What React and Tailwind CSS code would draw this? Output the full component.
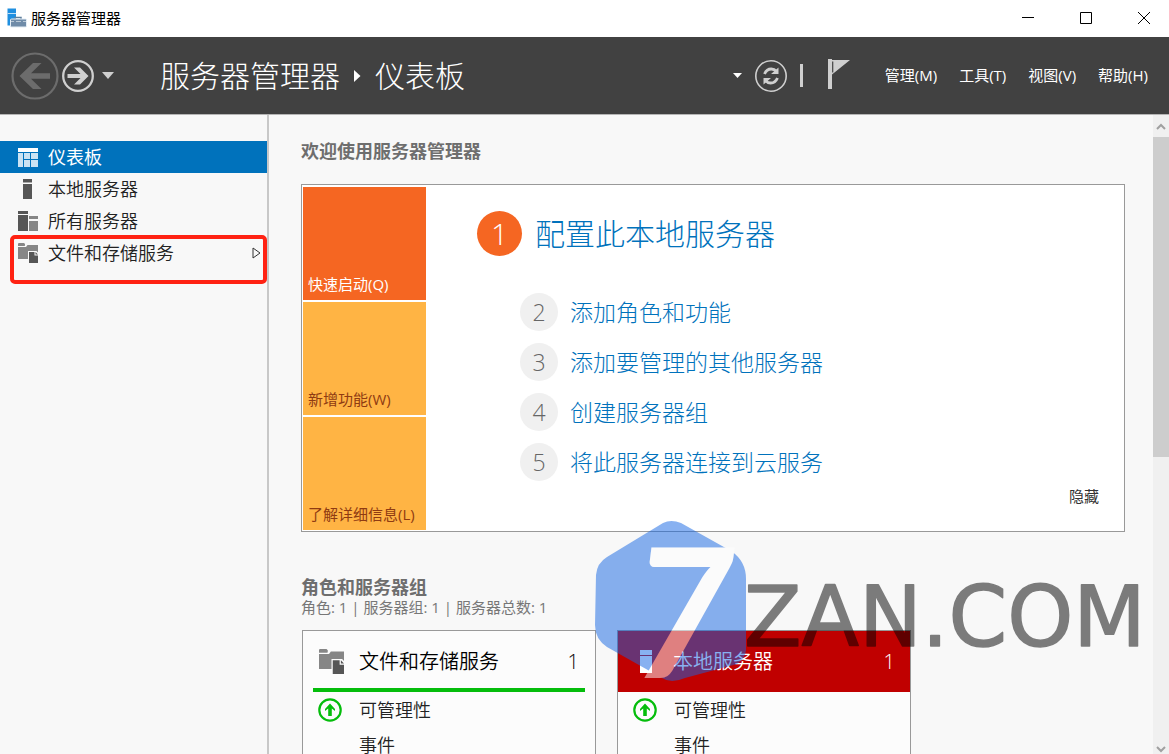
import { useState } from 'react';
import clsx from 'clsx';

const FONT = "font-['Open_Sans','Noto_Sans_CJK_SC',sans-serif]";

const NAV_ITEMS = [
  { id: 'dashboard', label: '仪表板', icon: DashboardIcon },
  { id: 'local', label: '本地服务器', icon: ServerIcon },
  { id: 'all', label: '所有服务器', icon: ServersIcon },
  { id: 'storage', label: '文件和存储服务', icon: StorageIcon, expandable: true, marked: true },
];

const MENUS = ['管理(M)', '工具(T)', '视图(V)', '帮助(H)'];

const TILES = [
  { label: '快速启动(Q)', style: 'bg-[#f56622] text-white' },
  { label: '新增功能(W)', style: 'bg-[#ffb444] text-[#8f3b12]' },
  { label: '了解详细信息(L)', style: 'bg-[#ffb444] text-[#8f3b12]' },
];

const STEPS = ['添加角色和功能', '添加要管理的其他服务器', '创建服务器组', '将此服务器连接到云服务'];

function AppIcon() {
  return (
    <svg width="20" height="20" viewBox="0 0 20 20" aria-hidden="true">
      <rect x="0.5" y="0.5" width="8.5" height="17" fill="#1f8fe0" />
      <path d="M0.5 5.5h8.5" stroke="#bfe0f7" />
      <path d="M8 11V9.5h6V11" fill="none" stroke="#5e7f9d" strokeWidth="1.5" />
      <rect x="3.5" y="11" width="16" height="8" rx="1" fill="#6f8ba8" stroke="#e4edf5" />
      <path d="M4 13.500h3M9 13.500h5M16 13.500h3" stroke="#b9c8d6" />
    </svg>
  );
}

function DashboardIcon() {
  return (
    <svg width="20" height="20" viewBox="0 0 20 20" aria-hidden="true">
      <rect width="20" height="4" y="1" fill="#fff" />
      <path fill="#cbe3f3" d="M0 6h5v14H0zM6 6h6v6H6zM13 6h7v6h-7zM6 13h6v7H6zM13 13h7v7h-7z" />
    </svg>
  );
}

function ServerIcon() {
  return (
    <svg width="20" height="20" viewBox="0 0 20 20" aria-hidden="true">
      <path fill="#565656" d="M5 0h9v3H5zM5 5h9v15H5z" />
      <path fill="#a9a9a9" d="M5 3h9v1H5z" />
    </svg>
  );
}

function ServersIcon() {
  return (
    <svg width="20" height="20" viewBox="0 0 20 20" aria-hidden="true">
      <path fill="#565656" d="M0 0h10v3H0zM0 4h10v16H0z" />
      <path fill="#868686" d="M11 5h9v3h-9zM11 10h9v10h-9z" />
    </svg>
  );
}

function StorageIcon({ size = 20 }) {
  return (
    <svg width={size} height={size} viewBox="0 0 20 20" aria-hidden="true">
      <path fill="#868686" d="M0 .5L.5 0H6l1 1v1.500L6.500 3H0z" />
      <path fill="#868686" d="M0 4h8l1.500-2H20v7.500L18.500 8H10v8H0z" />
      <path fill="#565656" d="M11 9h5.500v3.500H20V20h-9z" />
      <path fill="#565656" d="M17.500 9l2.500 2.500h-2.500z" />
    </svg>
  );
}

function UpIcon() {
  return (
    <svg width="24" height="24" viewBox="0 0 24 24" aria-hidden="true">
      <circle cx="12" cy="12" r="10.700" fill="none" stroke="#05bd0c" strokeWidth="2.200" />
      <path fill="#05bd0c" d="M12 5.500l5 5.500v2l-3.200-2.500V18h-3.600v-7.500L7 13v-2z" />
    </svg>
  );
}

function TitleBar() {
  return (
    <div className="flex h-[37px] shrink-0 items-center bg-white pr-[1px] pb-[1px] pl-[7px] text-black">
      <AppIcon />
      <span className="ml-1 text-[15px] leading-5">服务器管理器</span>
      <div className="ml-auto flex h-full gap-[10px]">
        <button type="button" aria-label="最小化" className="flex w-12 items-center justify-center">
          <svg width="12" height="12" viewBox="0 0 12 12"><path d="M0 5.500h12" stroke="#000" /></svg>
        </button>
        <button type="button" aria-label="最大化" className="flex w-12 items-center justify-center">
          <svg width="12" height="12" viewBox="0 0 12 12"><path d="M.5.5h11v11H.5z" fill="none" stroke="#000" /></svg>
        </button>
        <button type="button" aria-label="关闭" className="flex w-12 items-center justify-center">
          <svg width="12" height="12" viewBox="0 0 12 12"><path d="M0 0l12 12M12 0L0 12" stroke="#000" /></svg>
        </button>
      </div>
    </div>
  );
}

function Header() {
  return (
    <header className="flex h-[78px] shrink-0 items-center border-b border-[#b5b5b5] bg-[#414141] pr-[21px] pl-[11px] text-white">
      <button type="button" aria-label="后退">
        <svg width="48" height="48" viewBox="0 0 48 48">
          <circle cx="24" cy="24" r="22.500" fill="none" stroke="#6c6c6c" strokeWidth="2.200" />
          <path fill="#6c6c6c" d="M8.500 24L22 11h8.500L20 21.300h19v5.400H20L30.500 37H22z" />
        </svg>
      </button>
      <button type="button" aria-label="前进" className="ml-[3px]">
        <svg width="32" height="32" viewBox="0 0 32 32">
          <circle cx="16" cy="16" r="14.800" fill="none" stroke="#cfcfcf" strokeWidth="2.300" />
          <path fill="#cfcfcf" d="M26.500 16L18 24.500h-6l6.500-6.500H5.500v-4h13L12 7.500h6z" />
        </svg>
      </button>
      <button type="button" aria-label="历史记录" className="ml-2">
        <svg width="12" height="8" viewBox="0 0 12 8"><path d="M0 0h12L6 7z" fill="#cfcfcf" /></svg>
      </button>

      <h1 className="ml-[46px] flex items-center text-[30px] leading-10 font-light whitespace-nowrap">
        服务器管理器
        <svg className="mx-[14px]" width="7" height="12" viewBox="0 0 7 12" aria-hidden="true">
          <path d="M0 0l6.500 6L0 12z" fill="#fff" />
        </svg>
        仪表板
      </h1>

      <div className="ml-auto flex items-center">
        <button type="button" aria-label="刷新选项">
          <svg width="10" height="6" viewBox="0 0 10 6"><path d="M0 0h9L4.500 5z" fill="#fff" /></svg>
        </button>
        <button type="button" aria-label="刷新" className="ml-3">
          <svg width="32" height="32" viewBox="0 0 32 32">
            <circle cx="16" cy="16" r="15.200" fill="none" stroke="#cfcfcf" strokeWidth="1.600" />
            <path
              d="M9.500 14c1.500-3.500 3.800-5 6.800-5 2.200 0 3.800.8 5 2.200M22.500 18c-1.500 3.500-3.800 5-6.800 5-2.200 0-3.800-.8-5-2.200"
              fill="none"
              stroke="#cfcfcf"
              strokeWidth="2.800"
            />
            <path d="M23.500 7.500V14H16zM8.500 24.500V18H16z" fill="#cfcfcf" />
          </svg>
        </button>
        <span className="ml-[13px] h-[23px] w-[3px] bg-[#cfcfcf]" />
        <button type="button" aria-label="通知" className="ml-[25px]">
          <svg width="22" height="34" viewBox="0 0 22 34">
            <path d="M0 0h4v1h18L4 15.500V30H0z" fill="#cfcfcf" />
            <path d="M4.700 2.500v11" stroke="#414141" strokeWidth="1.200" />
          </svg>
        </button>
        <nav className="ml-[35px] flex gap-[22px] pb-[2px]">
          {MENUS.map((menu) => (
            <button key={menu} type="button" className="text-[15px] leading-5 whitespace-nowrap">
              {menu}
            </button>
          ))}
        </nav>
      </div>
    </header>
  );
}

function Sidebar() {
  const [active, setActive] = useState('dashboard');

  return (
    <aside className="w-[269px] shrink-0 border-r-2 border-[#c8c8c8] pt-[26px]">
      <ul className="flex flex-col">
        {NAV_ITEMS.map(({ id, label, icon: Icon, expandable, marked }) => (
          <li key={id} className="relative">
            <button
              type="button"
              onClick={() => setActive(id)}
              className={clsx(
                'flex h-8 w-full items-center gap-[10px] pr-[6px] pl-[18px] text-left text-[18px] leading-6',
                active === id ? 'bg-[#0072bc] text-white' : 'font-[350] text-[#222]'
              )}
            >
              <Icon />
              {label}
              {expandable && (
                <svg className="ml-auto" width="9" height="12" viewBox="0 0 9 12" aria-hidden="true">
                  <path d="M1 1l7 5-7 5z" fill="none" stroke="#333" />
                </svg>
              )}
            </button>
            {marked && (
              <span className="pointer-events-none absolute -top-[2px] right-0 -bottom-[15px] left-[10px] rounded-[5px] border-4 border-[#ff2213]" />
            )}
          </li>
        ))}
      </ul>
    </aside>
  );
}

function WelcomePanel() {
  return (
    <div className="flex border border-[#999] bg-white px-[1px] pt-[2px] pb-[1px]">
      <div className="flex w-[123px] shrink-0 flex-col gap-[2px]">
        {TILES.map((tile) => (
          <button
            key={tile.label}
            type="button"
            className={clsx('flex h-[113px] items-end px-[5px] pb-[6px] text-left text-[15px] leading-5 whitespace-nowrap', tile.style)}
          >
            {tile.label}
          </button>
        ))}
      </div>

      <div className="grow pt-6 pl-[51px]">
        <a href="#configure" className="flex items-center gap-[13px] text-[30px] leading-[44px] font-light text-[#0072bc]">
          <span className="flex size-[45px] items-center justify-center rounded-full bg-[#f56622] text-white">1</span>
          配置此本地服务器
        </a>
        <ol className="mt-[37px] flex flex-col gap-3 pl-[43px]">
          {STEPS.map((step, i) => (
            <li key={step}>
              <a href={`#step-${i + 2}`} className="flex items-center gap-3 text-[23px] leading-8 font-light text-[#0072bc]">
                <span className="flex size-[38px] items-center justify-center rounded-full bg-[#f0f0f0] text-[#666]">{i + 2}</span>
                {step}
              </a>
            </li>
          ))}
        </ol>
      </div>

      <button type="button" className="mr-6 mb-6 self-end text-[15px] leading-5 text-[#333]">
        隐藏
      </button>
    </div>
  );
}

function GroupCard({ title, count, alert, children }) {
  return (
    <section className="w-[294px] shrink-0 border border-[#999] bg-[#fcfcfc] text-[#222]">
      <div className={clsx(alert ? 'bg-[#c00000] px-[15px] text-white' : 'px-[10px] text-black')}>
        <div
          className={clsx(
            'flex h-[61px] items-center text-[20px] leading-7 font-[350]',
            !alert && 'border-b-4 border-[#05bd0c] px-[6px] pt-1'
          )}
        >
          <span className="w-10 shrink-0">{children}</span>
          <h3>{title}</h3>
          <span className="ml-auto">{count}</span>
        </div>
      </div>
      <ul className="text-[18px] leading-6 font-[350]">
        <li className="flex h-[35px] items-center pl-[15px]">
          <span className="w-[41px]"><UpIcon /></span>
          可管理性
        </li>
        <li className="flex h-[35px] items-center pl-14">事件</li>
      </ul>
    </section>
  );
}

function Scrollbar() {
  return (
    <div className="flex w-4 shrink-0 flex-col items-center bg-[#f0f0f0]" aria-hidden="true">
      <svg className="mt-2 mb-[6px] shrink-0" width="10" height="8" viewBox="0 0 10 8">
        <path d="M1 6l4-4 4 4" fill="none" stroke="#a0a0a0" strokeWidth="2" />
      </svg>
      <div className="h-1/2 w-full bg-[#cdcdcd]" />
      <svg className="mt-auto mb-[1px] shrink-0" width="10" height="8" viewBox="0 0 10 8">
        <path d="M1 2l4 4 4-4" fill="none" stroke="#a0a0a0" strokeWidth="2" />
      </svg>
    </div>
  );
}

// Translucent brand stamp over the dashboard
function Stamp() {
  return (
    <svg
      className="pointer-events-none absolute top-[520px] left-[594px] opacity-50"
      width="575"
      height="162"
      viewBox="0 0 575 162"
    >
      <path
        fill="#1466e4"
        d="M69 3Q77-1 87 3L137 31Q152 41 152 59V130Q151 139 143 144L91 158Q77 164 68 158L13 127Q1 119 1 105L2 55Q3 43 13 37Z"
      />
      <text x="37" y="158" fontSize="180" fontStyle="italic" fontWeight="700" fill="#fff" fontFamily="Lato, sans-serif">7</text>
      <text
        x="150"
        y="126"
        fontSize="84"
        fill="#000"
        stroke="#000"
        strokeWidth="1.500"
        strokeLinejoin="round"
        fontFamily="DejaVu Sans, sans-serif"
      >
        ZAN.COM
      </text>
    </svg>
  );
}

export default function App() {
  return (
    <div className={clsx('relative flex h-screen flex-col overflow-hidden bg-[#f8f8f8]', FONT)}>
      <TitleBar />
      <Header />
      <div className="flex min-h-0 grow">
        <Sidebar />
        <main className="min-w-0 grow overflow-hidden pr-7 pl-8">
          <h2 className="mt-6 mb-[21px] text-[18px] leading-6 font-bold text-[#6e6e6e]">欢迎使用服务器管理器</h2>
          <WelcomePanel />
          <h2 className="mt-[45px] text-[18px] leading-5 font-bold text-[#6e6e6e]">角色和服务器组</h2>
          <p className="text-[15px] leading-5 text-[#777]">角色: 1 | 服务器组: 1 | 服务器总数: 1</p>
          <div className="mt-[13px] flex gap-[21px] pl-[1px]">
            <GroupCard title="文件和存储服务" count={1}>
              <StorageIcon size={25} />
            </GroupCard>
            <GroupCard title="本地服务器" count={1} alert>
              <svg className="ml-[7px]" width="12" height="23" viewBox="0 0 12 23" aria-hidden="true">
                <path fill="#fff" d="M0 0h12v5H0zM0 6h12v17H0z" />
              </svg>
            </GroupCard>
          </div>
        </main>
        <Scrollbar />
      </div>
      <Stamp />
    </div>
  );
}
